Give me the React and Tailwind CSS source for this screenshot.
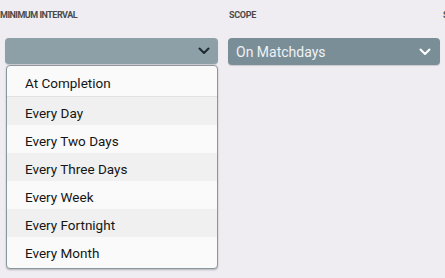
import React from "react";

const Chevron = ({ className }) => (
  <svg width="12" height="8" viewBox="0 0 12 8" className={className}>
    <path d="M1.5 1.5 L6 6 L10.5 1.5" fill="none" stroke="currentColor" strokeWidth="2" strokeLinecap="round" strokeLinejoin="round" />
  </svg>
);

export default function App() {
  const items = ["Every Day", "Every Two Days", "Every Three Days", "Every Week", "Every Fortnight", "Every Month"];
  return (
    <div className="w-[445px] h-[278px] bg-[#efedf2] overflow-hidden relative" style={{ fontFamily: "Roboto, 'Liberation Sans', sans-serif" }}>
      <div className="flex gap-[10px] pl-[5px] pt-[10px] w-[470px]">
        <div className="w-[213px] shrink-0 flex flex-col">
          <div className="-ml-[5px] h-[11px] text-[9px] font-bold text-[#4a4a4a] leading-[11px] tracking-[-0.5px] whitespace-nowrap">MINIMUM INTERVAL</div>
          <div className="mt-[17px] h-[26px] rounded-[4px] bg-[#8d9fa7] flex items-center justify-end pr-[8px] shadow-[0_1px_1px_rgba(0,0,0,0.15)]">
            <Chevron className="text-[#1f2a30]" />
          </div>
        </div>
        <div className="w-[212px] shrink-0 flex flex-col">
          <div className="h-[11px] text-[9px] font-bold text-[#4a4a4a] leading-[11px] pl-[1px] tracking-[-0.3px]">SCOPE</div>
          <div className="mt-[17px] h-[27px] rounded-[4px] bg-[#7a8e98] flex items-center justify-between pl-[8px] pr-[9px] text-[14px] text-[#eef2f4] shadow-[0_1px_1px_rgba(0,0,0,0.15)]">
            <span className="pt-[1px]">On Matchdays</span>
            <Chevron className="text-white" />
          </div>
        </div>
        <div className="shrink-0 h-[11px] text-[9px] font-bold text-[#4a4a4a] leading-[11px] -ml-[7px]">S</div>
      </div>
      <div className="absolute left-[6px] top-[65px] w-[212px] rounded-[4px] border border-[#8a979d] bg-[#fafafa] shadow-[0_1px_2px_rgba(0,0,0,0.25)] overflow-hidden text-[13.5px] text-[#151515] pb-[3px]">
        <div className="h-[31px] flex items-center pl-[18px] pt-[4px] border-b border-[#e1e1e3]">At Completion</div>
        {items.map((t, i) => (
          <div key={t} className={`h-[28px] flex items-center pl-[18px] pt-[5px] ${i % 2 === 0 ? "bg-[#f0f0f0]" : "bg-[#fafafa]"}`}>{t}</div>
        ))}
      </div>
    </div>
  );
}
